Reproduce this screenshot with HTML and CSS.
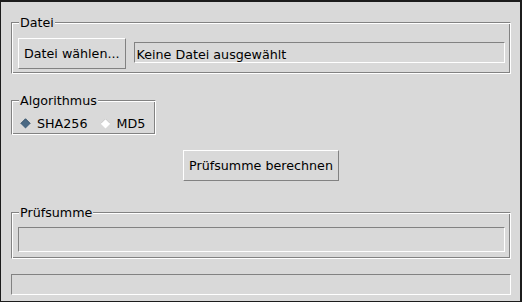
FILE: index.html
```html
<!DOCTYPE html>
<html lang="de">
<head>
<meta charset="utf-8">
<title>Prüfsumme</title>
<link rel="stylesheet" href="styles.css">
</head>
<body>
<div class="window">
  <fieldset class="group">
    <legend>Datei</legend>
    <div class="file-row">
      <button class="btn" type="button">Datei wählen...</button>
      <div class="entry entry-file">Keine Datei ausgewählt</div>
    </div>
  </fieldset>

  <fieldset class="group group-algo">
    <legend>Algorithmus</legend>
    <div class="radio-row">
      <label class="radio">
        <svg class="diamond" width="11" height="11" viewBox="0 0 11 11"><polygon points="5.5,0.5 10.5,5.5 5.5,10.5 0.5,5.5" fill="#4a6984"/><polyline points="0.8,5.5 5.5,0.8 10.2,5.5" fill="none" stroke="#3d576e" stroke-width="1"/></svg>
        <span>SHA256</span>
      </label>
      <label class="radio">
        <svg class="diamond" width="11" height="11" viewBox="0 0 11 11"><polygon points="5.5,0.5 10.5,5.5 5.5,10.5 0.5,5.5" fill="#ffffff"/><polyline points="0.8,5.5 5.5,0.8 10.2,5.5" fill="none" stroke="#c4c4c4" stroke-width="1"/></svg>
        <span>MD5</span>
      </label>
    </div>
  </fieldset>

  <button class="btn btn-compute" type="button">Prüfsumme berechnen</button>

  <fieldset class="group group-sum">
    <legend>Prüfsumme</legend>
    <div class="sum-body">
      <div class="entry entry-sum"></div>
    </div>
  </fieldset>

  <div class="entry status"></div>
</div>
</body>
</html>
```
FILE: styles.css
```css
* {
  box-sizing: border-box;
}

html,
body {
  margin: 0;
  padding: 0;
}

body {
  width: 522px;
  height: 302px;
  overflow: hidden;
  background: #1c1c1c;
  font-family: "DejaVu Sans", sans-serif;
  font-size: 12.7px;
  line-height: 15px;
  color: #000;
}

.window {
  margin: 2px 2px 0 1px;
  width: 519px;
  height: 299px;
  background: #d9d9d9;
  display: flex;
  flex-direction: column;
  padding: 13px 9px 0 10px;
}

.group {
  margin: 0;
  padding: 0;
  min-width: 0;
  border: 1px solid;
  border-color: #828282 #ffffff #ffffff #828282;
  box-shadow: inset 1px 1px 0 #ffffff, inset -1px -1px 0 #828282;
}

.group legend {
  margin-left: 7px;
  padding: 0 1px;
  background: #d9d9d9;
  line-height: 15px;
}

.file-row {
  display: flex;
  align-items: flex-start;
  gap: 8px;
  padding: 8px 5px 4px 6px;
}

.btn {
  margin: 0;
  height: 31px;
  padding: 7px 5px;
  font: inherit;
  line-height: 15px;
  color: #000;
  background: #d9d9d9;
  border: 1px solid;
  border-color: #ffffff #828282 #828282 #ffffff;
  border-radius: 0;
  white-space: nowrap;
}

.entry {
  background: #d9d9d9;
  border: 1px solid;
  border-color: #828282 #ffffff #ffffff #828282;
}

.entry-file {
  flex: 1;
  height: 21px;
  margin-top: 4px;
  padding: 4px 2px 0;
  white-space: nowrap;
  overflow: hidden;
}

.group-algo {
  align-self: flex-start;
  margin-top: 19px;
}

.radio-row {
  display: flex;
  padding: 8px 10px 3px 8px;
}

.radio {
  display: flex;
  align-items: center;
  gap: 6px;
}

.radio + .radio {
  margin-left: 12px;
}

.diamond {
  display: block;
  flex: none;
}

.btn-compute {
  align-self: center;
  margin-top: 15px;
}

.group-sum {
  margin-top: 24px;
}

.sum-body {
  padding: 7px 5px 6px 6px;
}

.entry-sum {
  height: 25px;
}

.status {
  margin-top: 15px;
  height: 21px;
}
```
